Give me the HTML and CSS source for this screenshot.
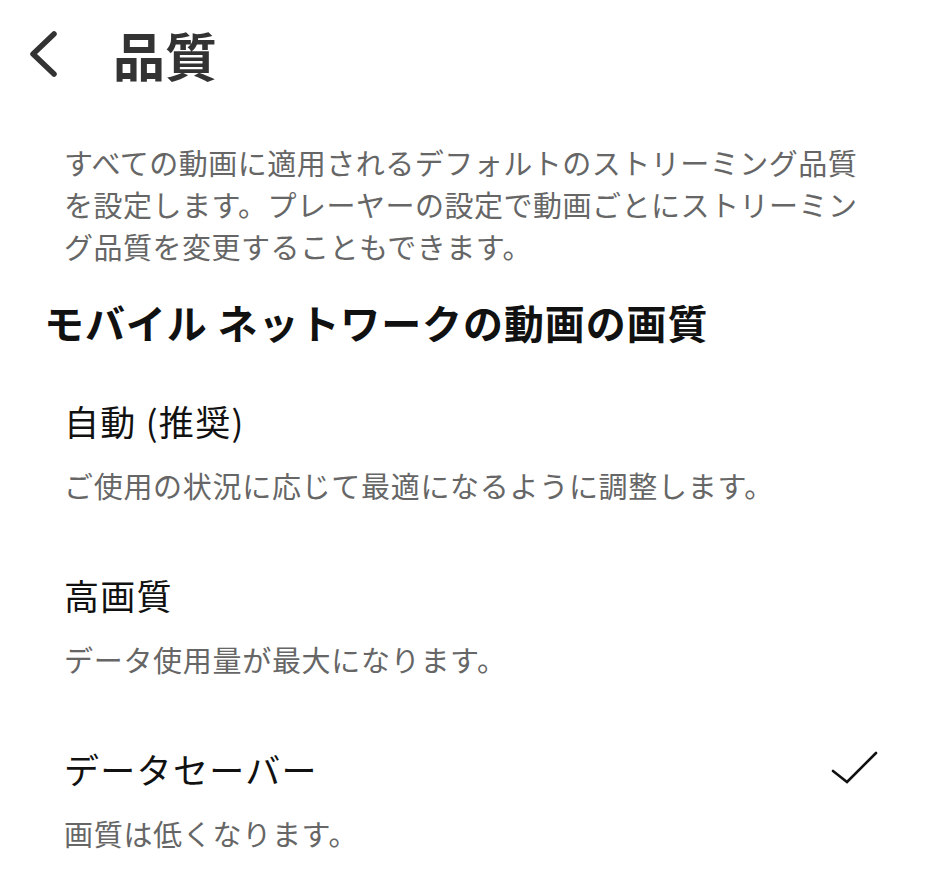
FILE: index.html
```html
<!DOCTYPE html>
<html lang="ja">
<head>
<meta charset="utf-8">
<title>品質</title>
<link rel="stylesheet" href="styles.css">
</head>
<body>
<div class="page">
  <header class="header">
    <svg class="back" width="34" height="50" viewBox="0 0 34 50" aria-hidden="true">
      <path d="M26 4 L5 24 L26 44" fill="none" stroke="#333" stroke-width="5.5" stroke-linecap="round" stroke-linejoin="round"/>
    </svg>
    <h1 class="title">品質</h1>
  </header>
  <p class="desc">すべての動画に適用されるデフォルトのストリーミング品質<br>を設定します。プレーヤーの設定で動画ごとにストリーミン<br>グ品質を変更することもできます。</p>
  <h2 class="section">モバイル ネットワークの動画の画質</h2>
  <div class="options">
    <div class="option">
      <div class="option-row"><span class="option-title">自動 (推奨)</span></div>
      <div class="option-sub">ご使用の状況に応じて最適になるように調整します。</div>
    </div>
    <div class="option">
      <div class="option-row"><span class="option-title">高画質</span></div>
      <div class="option-sub">データ使用量が最大になります。</div>
    </div>
    <div class="option">
      <div class="option-row">
        <span class="option-title">データセーバー</span>
        <svg class="check" width="50" height="40" viewBox="0 0 50 40" aria-hidden="true">
          <path d="M3 22 L17 33 L46 4" fill="none" stroke="#111" stroke-width="2.6" stroke-linecap="round" stroke-linejoin="miter"/>
        </svg>
      </div>
      <div class="option-sub">画質は低くなります。</div>
    </div>
  </div>
</div>
</body>
</html>
```

FILE: styles.css
```css
html, body {
  margin: 0;
  padding: 0;
  background: #ffffff;
}

body {
  font-family: "Noto Sans CJK JP", "Noto Sans", sans-serif;
  color: #111;
}

.page {
  width: 946px;
  height: 874px;
  overflow: hidden;
}

.header {
  height: 110px;
  display: flex;
  align-items: center;
  padding-left: 28px;
  box-sizing: border-box;
}

.back {
  display: block;
  flex: none;
  margin-top: -1px;
}

.title {
  margin: 0 0 0 51px;
  font-size: 52px;
  line-height: 1;
  font-weight: 700;
  color: #333;
}

.desc {
  margin: 31px 0 0 0;
  padding-left: 64px;
  font-size: 29px;
  line-height: 42px;
  letter-spacing: 0.5px;
  color: #666;
  white-space: nowrap;
}

.section {
  margin: 30px 0 0 0;
  padding-left: 44px;
  font-size: 40px;
  line-height: 50px;
  font-weight: 700;
  letter-spacing: 0.9px;
  color: #111;
  white-space: nowrap;
}

.options {
  display: flex;
  flex-direction: column;
  gap: 64px;
  margin-top: 49px;
  padding-left: 64px;
  padding-right: 66px;
}

.option {
  display: flex;
  flex-direction: column;
  gap: 18px;
}

.option-row {
  display: flex;
  align-items: center;
  justify-content: space-between;
  height: 50px;
}

.option-title {
  font-size: 35px;
  line-height: 50px;
  letter-spacing: 1.3px;
  color: #111;
  white-space: nowrap;
}

.check {
  display: block;
  flex: none;
}

.option-sub {
  font-size: 29px;
  line-height: 42px;
  letter-spacing: 0.7px;
  color: #666;
  white-space: nowrap;
}
```
